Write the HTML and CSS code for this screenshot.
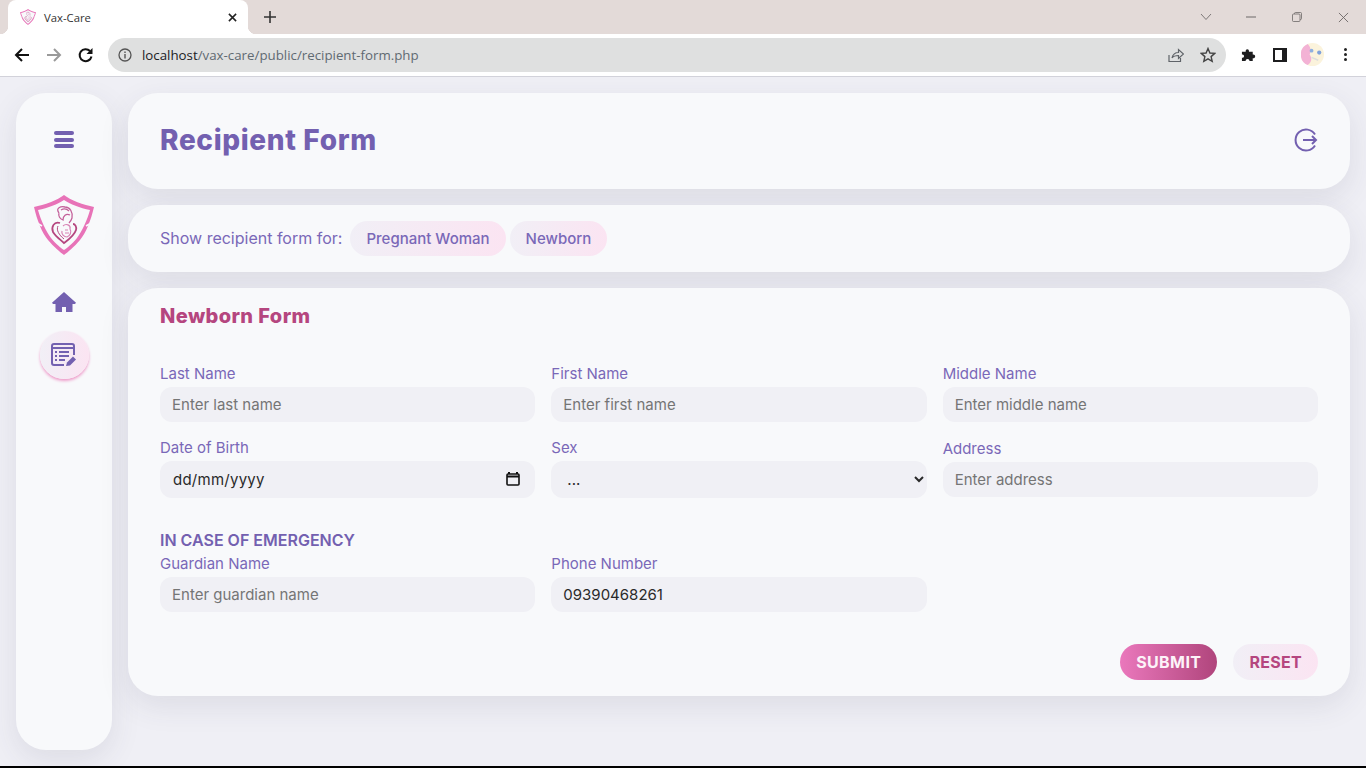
FILE: index.html
```html
<!DOCTYPE html>
<html lang="en-GB">
<head>
  <meta charset="UTF-8">
  <title>Vax-Care</title>
  <link rel="stylesheet" href="styles.css">
</head>
<body>
  <svg class="svg-defs">
    <symbol id="vax-logo" viewBox="0 0 60 60">
      <path d="M30 0C24 5 10 10 0 12C3 25 8 38 14 45C20 52 26 57 30 60C34 57 40 52 46 45C52 38 57 25 60 12C50 10 36 5 30 0Z" fill="#e873b8"/>
      <path d="M30 5C24 9 14 13 4 15C7 26 12 36 17 43C22 49 27 53 30 55C33 53 38 49 43 43C48 36 53 26 56 15C46 13 36 9 30 5Z" fill="#f8f9fb"/>
      <path d="M3 28L8 31M57 28L52 31" stroke="#f8f9fb" stroke-width="1.500"/>
      <path d="M25 18C21 13 27 11 31 12C36 12 39 17 38 23C37 26 36 27 35 28M25 18C24 21 26 24 29 25C29 21 32 18 36 20M27 15C30 13 33 14 35 16" fill="none" stroke="#c4609a" stroke-width="1.300"/>
      <path d="M26 28C20 26 17 32 19 37C22 42 27 45 30 48C34 45 40 41 42 35C43 32 41 29 39 29" fill="none" stroke="#b5467f" stroke-width="1.800"/>
      <path d="M24 31C22 35 25 40 30 44" fill="none" stroke="#b5467f" stroke-width="1"/>
      <path d="M29 31C32 28 37 30 36 34C38 37 36 41 33 42C30 42 27 39 28 36M31 35H34M31 38H35" fill="none" stroke="#d884b5" stroke-width="1.200"/>
    </symbol>
  </svg>

  <!-- Browser chrome -->
  <div class="tabstrip">
    <div class="tab">
      <svg class="favicon"><use href="#vax-logo"/></svg>
      <span class="tab-title">Vax-Care</span>
      <svg class="tab-close" viewBox="0 0 10 10"><path d="M1 1L9 9M9 1L1 9" stroke="#222" stroke-width="1.700"/></svg>
    </div>
    <svg class="new-tab" viewBox="0 0 12 12"><path d="M6 0V12M0 6H12" stroke="#333" stroke-width="1.600"/></svg>
    <div class="window-controls">
      <svg class="win-chevron" viewBox="0 0 12 8"><path d="M1 1L6 6.500L11 1" fill="none" stroke="#7d7878" stroke-width="1"/></svg>
      <svg class="win-min" viewBox="0 0 10 2"><path d="M0 1H10" stroke="#6d6868" stroke-width="1"/></svg>
      <svg class="win-restore" viewBox="0 0 10 10"><path d="M.5 3A1 1 0 0 1 1.500 2H7A1 1 0 0 1 8 3V8.500A1 1 0 0 1 7 9.500H1.500A1 1 0 0 1 .5 8.500ZM2.500 2V1.500A1 1 0 0 1 3.500 .5H8.500A1 1 0 0 1 9.500 1.500V6.500A1 1 0 0 1 8.500 7.500H8" fill="none" stroke="#6d6868" stroke-width=".8"/></svg>
      <svg class="win-close" viewBox="0 0 12 12"><path d="M1 1L11 11M11 1L1 11" stroke="#6d6868" stroke-width="1"/></svg>
    </div>
  </div>
  <div class="toolbar">
    <svg class="nav-icon" viewBox="0 0 16 16"><path d="M15 8H2M8 2L2 8L8 14" fill="none" stroke="#111" stroke-width="2"/></svg>
    <svg class="nav-icon" viewBox="0 0 16 16"><path d="M1 8H14M8 2L14 8L8 14" fill="none" stroke="#9a9a9a" stroke-width="2"/></svg>
    <svg class="nav-icon" viewBox="0 0 16 16"><path d="M13.500 9.500A6 6 0 1 1 12 4" fill="none" stroke="#111" stroke-width="2"/><path d="M14.500 1V7H8.500Z" fill="#111"/></svg>
    <div class="omnibox">
      <svg class="info-icon" viewBox="0 0 14 14"><circle cx="7" cy="7" r="6" fill="none" stroke="#555" stroke-width="1.300"/><path d="M7 6V10.500M7 3.500V5" stroke="#555" stroke-width="1.400"/></svg>
      <span class="url"><span class="url-host">localhost</span>/vax-care/public/recipient-form.php</span>
      <svg class="omni-icon" viewBox="0 0 16 16"><path d="M1 8V14.500H12.500V11M4 11C5 7 8 5.500 10.500 5.500V2.500L15.500 7L10.500 11.500V8.500C8 8.500 5.500 9 4 11Z" fill="none" stroke="#5f6368" stroke-width="1.200"/></svg>
      <svg class="omni-icon" viewBox="0 0 16 16"><path d="M8 1.500L9.900 6L14.800 6.400L11.100 9.600L12.200 14.400L8 11.900L3.800 14.400L4.900 9.600L1.200 6.400L6.100 6Z" fill="none" stroke="#444" stroke-width="1.400"/></svg>
    </div>
    <svg class="tool-puzzle" viewBox="0 0 16 16"><path d="M1 5H5C4.500 1.500 9 1.500 8.500 5H12.500V8C16 7.500 16 12.500 12.500 12V15H9C9.500 12 4.500 12 5 15H1V11.500C4 12 4 7.500 1 8Z" fill="#1d1d1f"/></svg>
    <div class="tool-panel"></div>
    <svg class="tool-avatar" viewBox="0 0 24 24">
      <circle cx="12" cy="12" r="12" fill="#fbf3dc"/>
      <path d="M7 1A12 12 0 0 0 7 23C11 20 12 16 9 12C11 8 10 4 7 1Z" fill="#f3b2d5"/>
      <circle cx="11" cy="8" r="2" fill="#8fb0e0"/>
      <circle cx="19" cy="10" r="2.200" fill="#7fa2dc"/>
      <path d="M11 15L18 18" stroke="#ddd" stroke-width="1.500"/>
    </svg>
    <div class="tool-dots"><i></i><i></i><i></i></div>
  </div>

  <!-- Page -->
  <div class="page">
    <aside class="sidebar">
      <div class="menu-btn"><i></i><i></i><i></i></div>
      <svg class="logo"><use href="#vax-logo"/></svg>
      <svg class="home-icon" viewBox="0 0 24 20"><path d="M12 0L24 10.800L23 12H20.500V20H14V15H10V20H3.500V12H1L0 10.800Z" fill="#7360b0"/></svg>
      <div class="nav-active">
        <svg class="form-icon" viewBox="0 0 26 24">
          <path d="M13 22H3A2 2 0 0 1 1 20V3A2 2 0 0 1 3 1H21A2 2 0 0 1 23 3V12" fill="none" stroke="#7360b0" stroke-width="2"/>
          <path d="M1 5H23" stroke="#7360b0" stroke-width="2"/>
          <path d="M4 9H6M8 9H18M4 13H6M8 13H18M4 17H6M8 17H14" stroke="#7360b0" stroke-width="1.800"/>
          <path d="M15 23L16 19.500L22 13.500L25 16.500L19 22.500Z" fill="#7360b0"/>
        </svg>
      </div>
    </aside>

    <main class="content">
      <header class="card page-header">
        <h1>Recipient Form</h1>
        <svg class="logout-icon" viewBox="0 0 24 24">
          <path d="M21 6.500A10.500 10.500 0 1 0 21 17.500" fill="none" stroke="#7360b0" stroke-width="2"/>
          <path d="M9 12H22M18 8L22 12L18 16" fill="none" stroke="#7360b0" stroke-width="2"/>
        </svg>
      </header>

      <section class="card chooser">
        <span class="chooser-label">Show recipient form for:</span>
        <button class="chip">Pregnant Woman</button>
        <button class="chip">Newborn</button>
      </section>

      <section class="card form-card">
        <h2>Newborn Form</h2>
        <form>
          <div class="form-grid">
            <div class="field">
              <label>Last Name</label>
              <input type="text" placeholder="Enter last name">
            </div>
            <div class="field">
              <label>First Name</label>
              <input type="text" placeholder="Enter first name">
            </div>
            <div class="field">
              <label>Middle Name</label>
              <input type="text" placeholder="Enter middle name">
            </div>
            <div class="field">
              <label>Date of Birth</label>
              <div class="date-wrap">
                <input class="tall date-text" type="text" placeholder="dd/mm/yyyy">
                <svg class="calendar-icon" viewBox="0 0 14 14"><path d="M3 0V2M11 0V2" stroke="#111" stroke-width="2"/><rect x="1" y="2" width="12" height="11" rx="1" fill="none" stroke="#111" stroke-width="1.600"/><path d="M1 4.500H13" stroke="#111" stroke-width="2"/></svg>
              </div>
            </div>
            <div class="field">
              <label>Sex</label>
              <select class="tall">
                <option>...</option>
              </select>
            </div>
            <div class="field">
              <label>Address</label>
              <input type="text" placeholder="Enter address">
            </div>
          </div>

          <h3>IN CASE OF EMERGENCY</h3>
          <div class="form-grid">
            <div class="field">
              <label>Guardian Name</label>
              <input type="text" placeholder="Enter guardian name">
            </div>
            <div class="field">
              <label>Phone Number</label>
              <input type="text" value="09390468261">
            </div>
          </div>

          <div class="form-actions">
            <button type="submit" class="btn-submit">SUBMIT</button>
            <button type="reset" class="btn-reset">RESET</button>
          </div>
        </form>
      </section>
    </main>
  </div>
  <div class="screen-edge"></div>
</body>
</html>
```

FILE: styles.css
```css
* {
  box-sizing: border-box;
}
html, body {
  height: 100%;
}
body {
  margin: 0;
  display: flex;
  flex-direction: column;
  overflow: hidden;
  background: #efeff5;
  font-family: Inter, "Liberation Sans", sans-serif;
  color: #7360b0;
}
.svg-defs {
  display: none;
}

/* Browser chrome */
.tabstrip {
  height: 34px;
  flex: none;
  display: flex;
  align-items: center;
  background: #e3dad8;
  padding-left: 8px;
}
.tab {
  position: relative;
  width: 240px;
  height: 34px;
  display: flex;
  align-items: center;
  background: #fff;
  border-radius: 8px 8px 0 0;
  padding: 0 11px 0 12px;
}
.tab::before, .tab::after {
  content: "";
  position: absolute;
  bottom: 0;
  width: 8px;
  height: 8px;
}
.tab::before {
  left: -8px;
  background: radial-gradient(circle at 0 0, #e3dad8 8px, #fff 8.5px);
}
.tab::after {
  right: -8px;
  background: radial-gradient(circle at 100% 0, #e3dad8 8px, #fff 8.5px);
}
.favicon {
  width: 16px;
  height: 16px;
}
.tab-title {
  margin-left: 8px;
  flex: 1;
  font-family: "Open Sans", sans-serif;
  font-size: 11.3px;
  color: #333;
}
.tab-close {
  width: 9px;
  height: 9px;
}
.new-tab {
  width: 12px;
  height: 12px;
  margin-left: 16px;
}
.window-controls {
  margin-left: auto;
  display: flex;
  align-items: center;
  height: 100%;
}
.win-chevron {
  width: 12px;
  height: 8px;
  margin-right: 34px;
}
.win-min {
  width: 10px;
  height: 2px;
  margin-right: 36px;
}
.win-restore {
  width: 10px;
  height: 10px;
  margin-right: 36px;
}
.win-close {
  width: 11px;
  height: 11px;
  margin-right: 17px;
}

.toolbar {
  height: 43px;
  flex: none;
  display: flex;
  align-items: center;
  background: #fff;
  border-bottom: 1px solid #d2d2da;
  padding: 0 0 1px 14px;
}
.nav-icon {
  width: 16px;
  height: 16px;
  margin-right: 16px;
}
.omnibox {
  width: 1118px;
  height: 34px;
  margin-left: -2px;
  display: flex;
  align-items: center;
  background: #dfe0e0;
  border-radius: 17px;
  padding: 0 10px;
}
.info-icon {
  width: 14px;
  height: 14px;
}
.url {
  margin-left: 10px;
  flex: 1;
  font-family: "Open Sans", sans-serif;
  font-size: 13.3px;
  color: #5f6a72;
}
.url-host {
  color: #202124;
}
.omni-icon {
  width: 16px;
  height: 16px;
  margin-left: 16px;
}
.tool-puzzle {
  width: 15px;
  height: 15px;
  margin-left: 15px;
}
.tool-panel {
  width: 14px;
  height: 14px;
  margin-left: 17px;
  border: 2px solid #1d1d1f;
  border-right-width: 5px;
}
.tool-avatar {
  width: 23px;
  height: 23px;
  margin-left: 14px;
}
.tool-dots {
  margin-left: 20px;
  display: flex;
  flex-direction: column;
  gap: 2px;
}
.tool-dots i {
  width: 3px;
  height: 3px;
  border-radius: 50%;
  background: #222;
}

/* Page */
.page {
  flex: 1;
  display: flex;
  gap: 16px;
  align-items: flex-start;
  padding: 16px;
}
.sidebar {
  width: 96px;
  height: 657px;
  flex: none;
  display: flex;
  flex-direction: column;
  align-items: center;
  background: #f8f9fb;
  border-radius: 30px;
  box-shadow: 0 10px 30px rgba(60, 60, 90, 0.1);
  padding-top: 38px;
}
.menu-btn {
  display: flex;
  flex-direction: column;
  gap: 2.5px;
}
.menu-btn i {
  width: 20px;
  height: 4px;
  border-radius: 2px;
  background: #7360b0;
}
.logo {
  width: 60px;
  height: 60px;
  margin-top: 47px;
}
.home-icon {
  width: 24px;
  height: 20px;
  margin-top: 37px;
}
.nav-active {
  width: 49px;
  height: 48px;
  margin-top: 19px;
  display: flex;
  align-items: center;
  justify-content: center;
  border-radius: 50%;
  background: linear-gradient(to right, #f1eff6, #fbe4f2);
  box-shadow: 0 2px 3px #ee9cca;
}
.form-icon {
  width: 26px;
  height: 24px;
}

.content {
  flex: 1;
  display: flex;
  flex-direction: column;
  gap: 16px;
}
.card {
  background: #f8f9fb;
  border-radius: 30px;
  box-shadow: 0 10px 30px rgba(60, 60, 90, 0.1);
}
.page-header {
  height: 96px;
  display: flex;
  align-items: center;
  justify-content: space-between;
  padding: 0 32px;
}
h1 {
  margin: -2px 0 0;
  font-size: 28px;
  font-weight: 800;
  letter-spacing: 0.65px;
}
.logout-icon {
  width: 24px;
  height: 24px;
  margin-top: -3px;
}
.chooser {
  height: 67px;
  display: flex;
  align-items: center;
  gap: 4px;
  padding: 0 32px;
}
.chooser-label {
  font-size: 16px;
  margin: -2px 4px 0 0;
  color: #7a68b8;
}
.chip {
  height: 35px;
  border: none;
  border-radius: 18px;
  background: linear-gradient(to right, #f1eff6, #fbe4f2);
  color: #7a68b8;
  font-family: inherit;
  font-size: 15px;
  font-weight: 500;
  padding: 0 16px;
}
.form-card {
  height: 408px;
  padding: 16px 32px;
}
h2 {
  margin: 0 0 35px;
  font-size: 20px;
  line-height: 25px;
  font-weight: 800;
  letter-spacing: 0.4px;
  color: #b5467f;
}
h3 {
  margin: 32px 0 4px;
  font-size: 16px;
  line-height: 20px;
  font-weight: 600;
}
.form-grid {
  display: grid;
  grid-template-columns: repeat(3, 1fr);
  gap: 16px;
  align-items: center;
}
.field label {
  display: block;
  font-size: 15px;
  line-height: 20px;
  margin-bottom: 3px;
  color: #7a68b8;
}
.field input, .field select {
  display: block;
  width: 100%;
  height: 35px;
  border: none;
  outline: none;
  border-radius: 12px;
  background: #f0f0f5;
  color: #2a2a2a;
  font-family: inherit;
  font-size: 15px;
  padding: 0 12px;
}
.field input.tall, .field select.tall {
  height: 37px;
}
.field input::placeholder {
  color: #757575;
}
.date-wrap {
  position: relative;
}
.field input.date-text {
  padding-left: 13px;
  letter-spacing: 0.25px;
}
.field input.date-text::placeholder {
  color: #2a2a2a;
}
.calendar-icon {
  position: absolute;
  top: 11px;
  right: 15px;
  width: 14px;
  height: 14px;
}
.form-actions {
  display: flex;
  justify-content: flex-end;
  gap: 16px;
  margin-top: 32px;
}
.form-actions button {
  height: 36px;
  border: none;
  border-radius: 18px;
  font-family: inherit;
  font-size: 16px;
  font-weight: 700;
  padding: 0 16px;
}
.btn-submit {
  background: linear-gradient(to right, #ea78bc, #b0457c);
  color: #fdf3f9;
  letter-spacing: 0.4px;
}
.btn-reset {
  background: linear-gradient(to right, #f1eff6, #fbe4f2);
  color: #b5467f;
  letter-spacing: 0.3px;
}
.screen-edge {
  height: 2px;
  flex: none;
  background: #000;
}
```
